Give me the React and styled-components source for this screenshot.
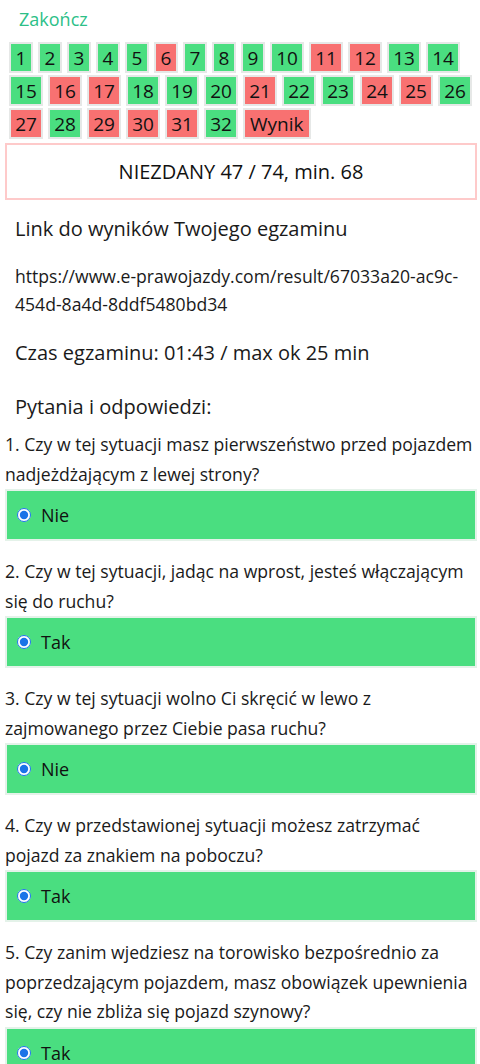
import styled, { createGlobalStyle } from 'styled-components'

const GlobalStyle = createGlobalStyle`
	body {
		margin: 0;
		background: #ffffff;
		font-family: 'Open Sans', 'Noto Sans', sans-serif;
		color: #1a1a1a;
	}
`

const Page = styled.div`
	padding: 0 3px 20px 5px;
`

const FinishLink = styled.a`
	display: block;
	padding: 7px 0 0 14px;
	height: 27px;
	font-size: 18px;
	color: #2dbf88;
	text-decoration: none;
`

const Grid = styled.div`
	display: flex;
	flex-wrap: wrap;
	column-gap: 5px;
	row-gap: 2px;
	margin: 8px 0 0 4px;
`

const Cell = styled.a`
	box-sizing: border-box;
	display: flex;
	align-items: center;
	justify-content: center;
	height: 31px;
	min-width: ${(p) => (p.$wide ? '34px' : '24px')};
	padding: ${(p) => (p.$label ? '0 5px' : '0 3px')};
	border: 2px solid #e6e8e7;
	background-color: ${(p) => (p.$ok ? '#4ade80' : '#f87171')};
	font-size: 19px;
	color: #111111;
	text-decoration: none;
`

const ResultBox = styled.div`
	margin-top: 4px;
	height: 57px;
	box-sizing: border-box;
	border: 2px solid #fecaca;
	display: flex;
	align-items: center;
	justify-content: center;
	font-size: 20px;
	color: #111111;
`

const Paragraph = styled.p`
	margin: 0;
	padding: ${(p) => p.$pad || '0 10px'};
	font-size: ${(p) => p.$size || '18px'};
	line-height: ${(p) => p.$lh || '28px'};
	color: #1a1a1a;
	overflow-wrap: anywhere;
`

const Question = styled.div`
	margin-top: ${(p) => (p.$first ? '0' : '16px')};
`

const QuestionText = styled.div`
	font-size: 17.6px;
	line-height: 29.5px;
	color: #1a1a1a;
`

const Answer = styled.label`
	box-sizing: border-box;
	display: flex;
	align-items: center;
	gap: 10px;
	height: 52px;
	padding-left: 10px;
	border: 2px solid #e4f2e9;
	background-color: #4ade80;
	font-size: 18px;
	color: #111111;
`

const Radio = styled.input`
	margin: 0;
	width: 14px;
	height: 14px;
	accent-color: #1a73e8;
`

const cells = [
	1, 1, 1, 1, 1, 0, 1, 1, 1, 1, 0, 0, 1, 1,
	1, 0, 0, 1, 1, 1, 0, 1, 1, 0, 0, 1,
	0, 1, 0, 0, 0, 1,
]

const questions = [
	{ text: '1. Czy w tej sytuacji masz pierwszeństwo przed pojazdem nadjeżdżającym z lewej strony?', answer: 'Nie' },
	{ text: '2. Czy w tej sytuacji, jadąc na wprost, jesteś włączającym się do ruchu?', answer: 'Tak' },
	{ text: '3. Czy w tej sytuacji wolno Ci skręcić w lewo z zajmowanego przez Ciebie pasa ruchu?', answer: 'Nie' },
	{ text: '4. Czy w przedstawionej sytuacji możesz zatrzymać pojazd\u00a0za znakiem na poboczu?', answer: 'Tak' },
	{ text: '5. Czy zanim wjedziesz na torowisko bezpośrednio za poprzedzającym pojazdem, masz obowiązek upewnienia się, czy nie zbliża się pojazd szynowy?', answer: 'Tak' },
]

function App() {
	return (
		<Page>
			<GlobalStyle />
			<FinishLink href='#'>Zakończ</FinishLink>
			<Grid>
				{cells.map((ok, i) => (
					<Cell key={i} href='#' $ok={ok === 1} $wide={i >= 9}>
						{i + 1}
					</Cell>
				))}
				<Cell href='#' $wide $label>
					Wynik
				</Cell>
			</Grid>
			<ResultBox>NIEZDANY 47 / 74, min. 68</ResultBox>
			<Paragraph $pad='14px 10px 0' $size='20px' $lh='30px'>
				Link do wyników Twojego egzaminu
			</Paragraph>
			<Paragraph $pad='18px 10px 0' $size='17.6px'>
				https://www.e-prawojazdy.com/result/67033a20-ac9c-<wbr />454d-8a4d-8ddf5480bd34
			</Paragraph>
			<Paragraph $pad='20px 10px 0' $size='20px' $lh='30px'>
				Czas egzaminu: 01:43 / max ok 25 min
			</Paragraph>
			<Paragraph $pad='24px 10px 8px' $size='20px' $lh='30px'>
				Pytania i odpowiedzi:
			</Paragraph>
			{questions.map((q, i) => (
				<Question key={i} $first={i === 0}>
					<QuestionText>{q.text}</QuestionText>
					<Answer>
						<Radio type='radio' checked readOnly />
						{q.answer}
					</Answer>
				</Question>
			))}
		</Page>
	)
}

export default App
